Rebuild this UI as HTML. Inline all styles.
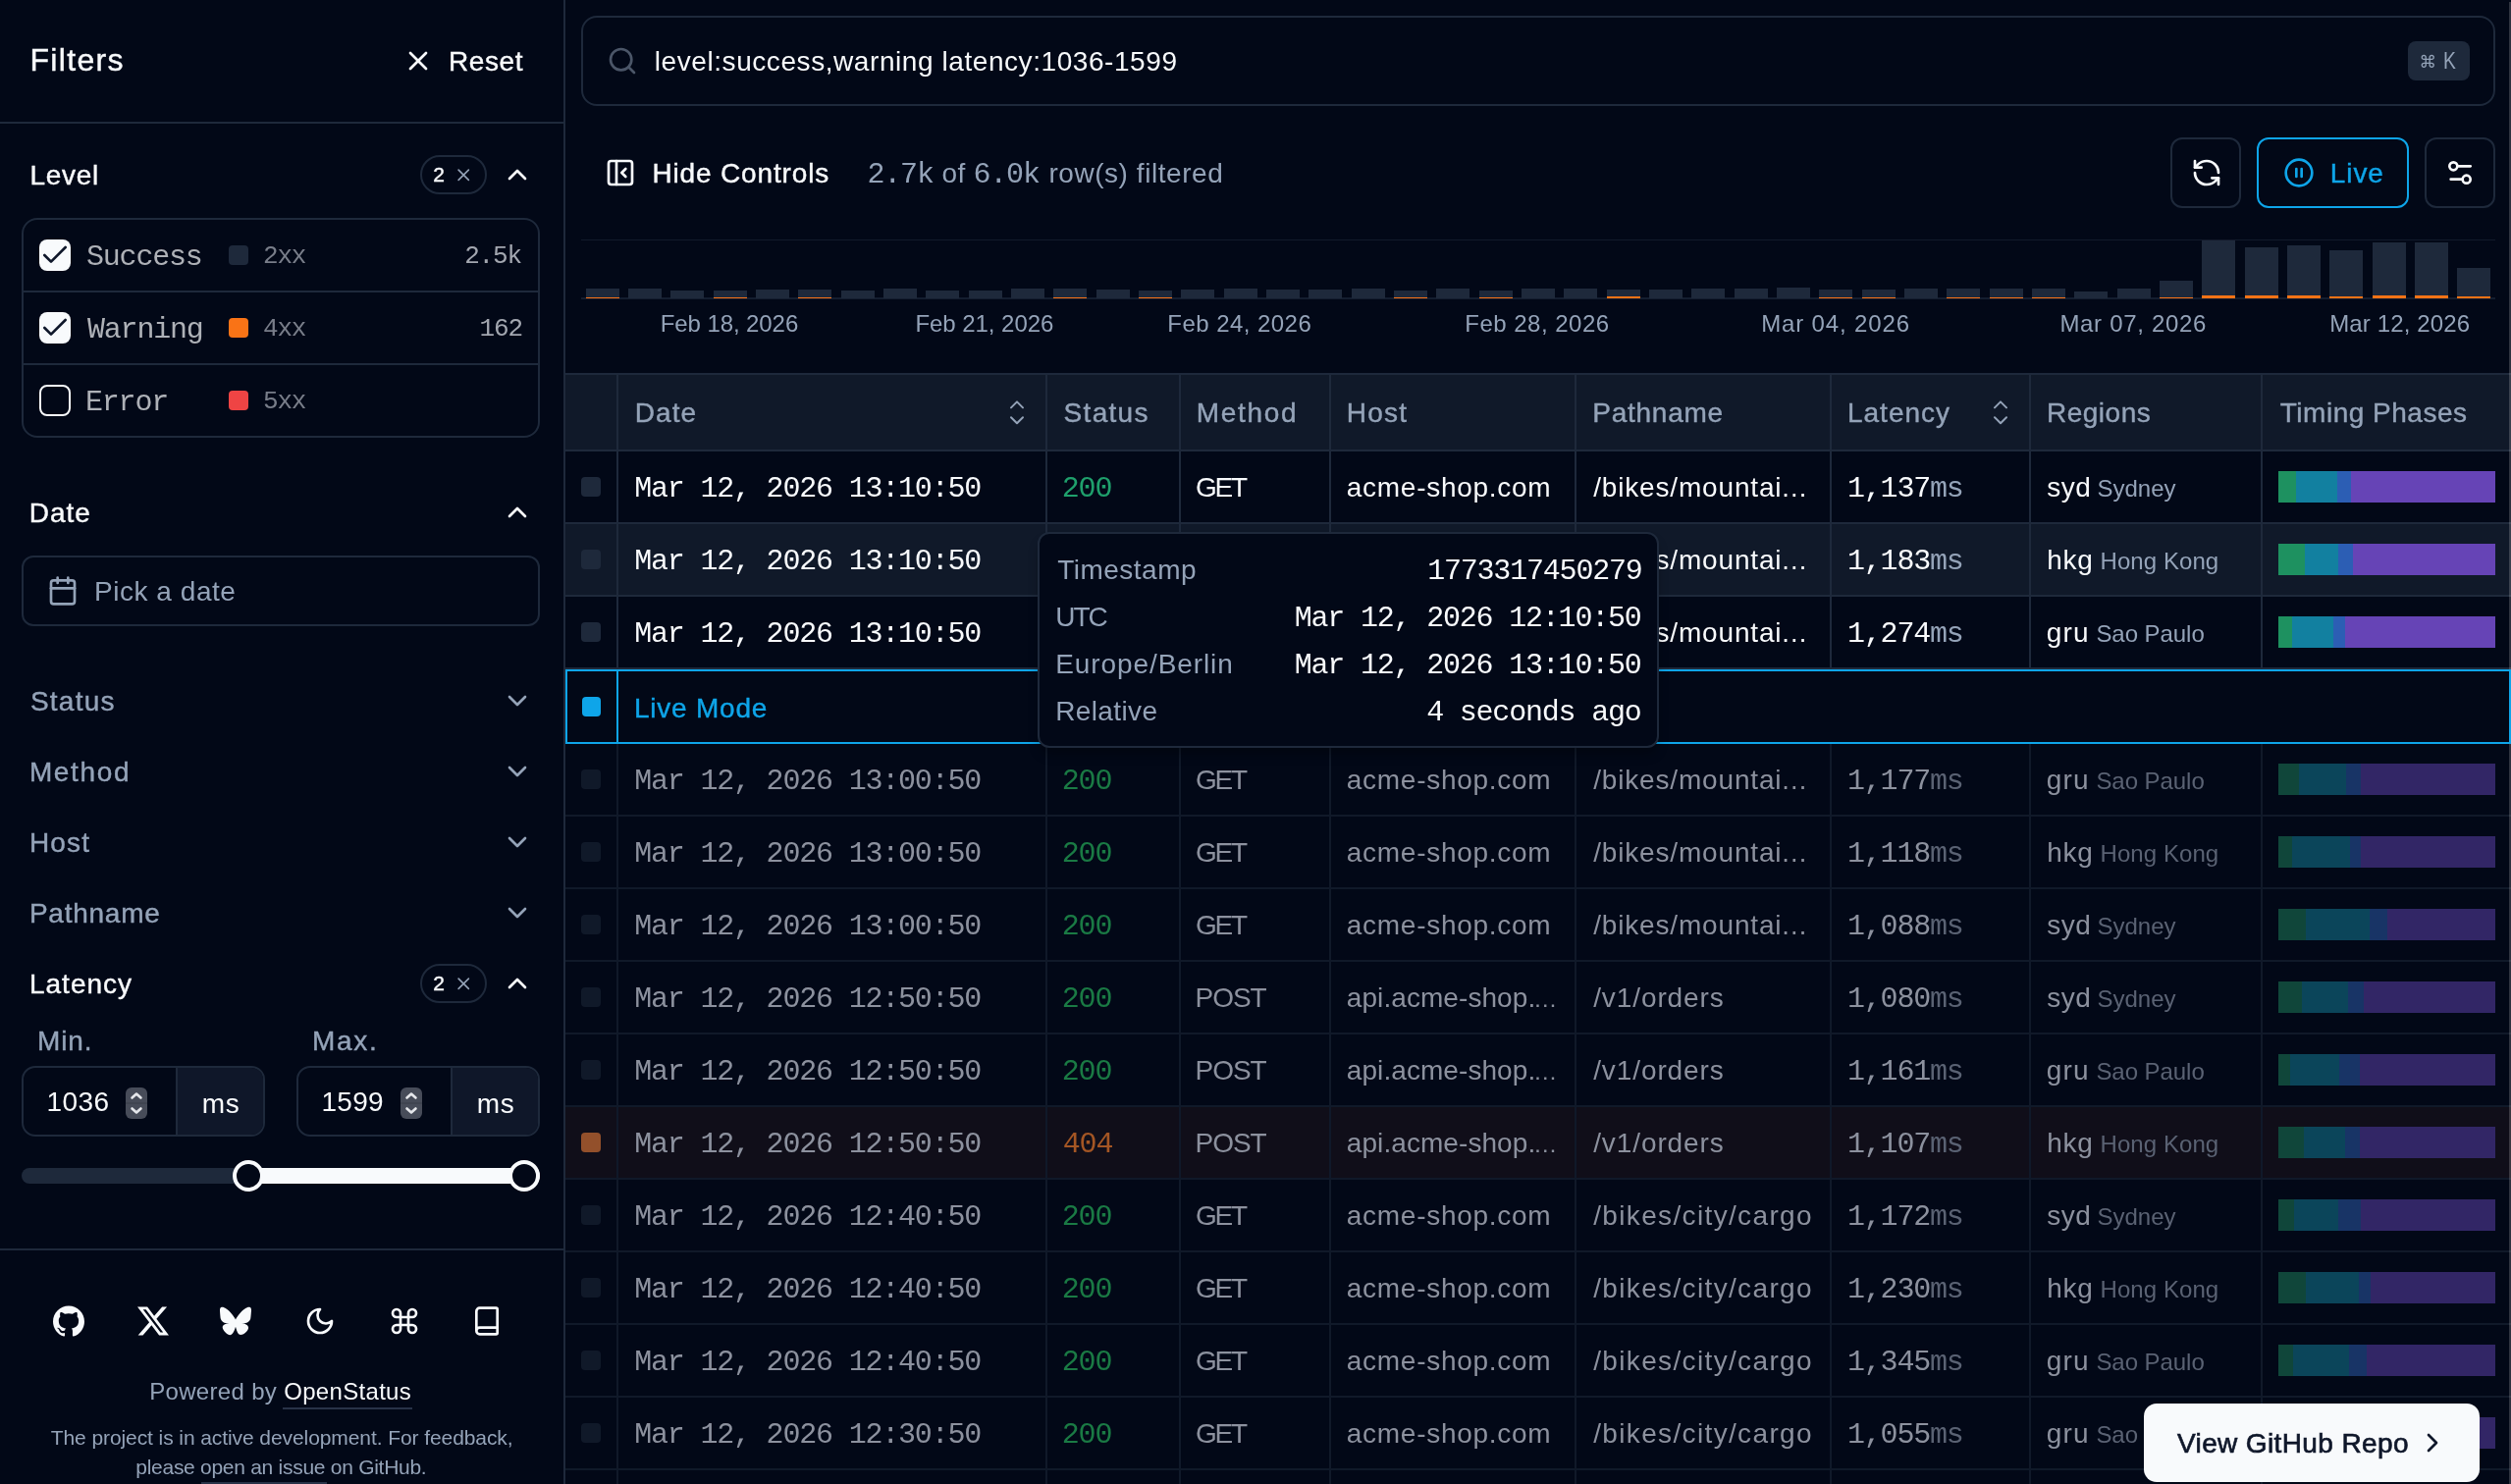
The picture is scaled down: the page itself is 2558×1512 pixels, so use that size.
<!DOCTYPE html>
<html lang="en"><head><meta charset="utf-8"><title>Data Table Filters</title><style>
html,body{margin:0;padding:0}
html{overflow:hidden;background:#020817}
body{width:2558px;height:1512px;overflow:hidden;position:relative;background:#020817;will-change:transform;-webkit-font-smoothing:antialiased;font-family:"Liberation Sans",sans-serif;color:#f8fafc}
div,span.t,svg.ic{position:absolute}
span.t{white-space:pre;display:block}
span.m{font-family:"Liberation Mono",monospace}
aside,header,section,main{display:contents}
</style></head><body>
<aside>
<div style="left:574px;top:0px;width:2px;height:1512px;background:#1e293b"></div>
<div style="left:0px;top:124px;width:574px;height:2px;background:#1e293b"></div>
<span class="t" style="left:30.40px;top:40.00px;font-size:32px;line-height:42px;color:#f8fafc;letter-spacing:1.348px;-webkit-text-stroke:0.4px;">Filters</span>
<svg class="ic" style="left:410px;top:46px" width="32" height="32" viewBox="0 0 24 24" fill="none" stroke="#f8fafc" stroke-width="2" stroke-linecap="round" stroke-linejoin="round"><path d="M18 6 6 18"/><path d="m6 6 12 12"/></svg>
<span class="t" style="left:457.10px;top:45.00px;font-size:28px;line-height:36px;color:#f8fafc;letter-spacing:0.559px;-webkit-text-stroke:0.4px;">Reset</span>
<span class="t" style="left:30.40px;top:161.00px;font-size:28px;line-height:36px;color:#f8fafc;letter-spacing:0.721px;-webkit-text-stroke:0.4px;">Level</span>
<div style="left:428px;top:158px;width:68px;height:40px;border:2px solid #1e293b;border-radius:20px;box-sizing:border-box"></div>
<span class="t" style="left:441.30px;top:164.00px;font-size:21px;line-height:27px;color:#f8fafc;-webkit-text-stroke:0.4px;">2</span>
<svg class="ic" style="left:461.7px;top:167.9px" width="20.5" height="20.5" viewBox="0 0 24 24" fill="none" stroke="#94a3b8" stroke-width="1.9" stroke-linecap="round" stroke-linejoin="round"><path d="M18 6 6 18"/><path d="m6 6 12 12"/></svg>
<svg class="ic" style="left:511px;top:162px" width="32" height="32" viewBox="0 0 24 24" fill="none" stroke="#f8fafc" stroke-width="2" stroke-linecap="round" stroke-linejoin="round"><path d="m18 15-6-6-6 6"/></svg>
<div style="left:22px;top:222px;width:528px;height:224px;border:2px solid #1e293b;border-radius:16px;box-sizing:border-box"></div>
<div style="left:24px;top:296px;width:524px;height:2px;background:#1e293b"></div>
<div style="left:24px;top:370px;width:524px;height:2px;background:#1e293b"></div>
<div style="left:40px;top:244px;width:32px;height:32px;background:#f8fafc;border-radius:8px"></div>
<svg class="ic" style="left:40px;top:244px" width="32" height="32" viewBox="0 0 24 24" fill="none" stroke="#0f172a" stroke-width="2" stroke-linecap="round" stroke-linejoin="round"><path d="M20 6 9 17l-5-5"/></svg>
<span class="t m" style="left:88.00px;top:243.00px;font-size:30px;line-height:39px;color:#aeb1b7;letter-spacing:-1.200px;">Success</span>
<div style="left:233px;top:250px;width:20px;height:20px;background:#1e293b;border-radius:4px"></div>
<span class="t m" style="left:268.00px;top:244.00px;font-size:26px;line-height:34px;color:#787d89;letter-spacing:-1.200px;">2xx</span>
<span class="t m" style="left:473.19px;top:244.00px;font-size:26px;line-height:34px;color:#a3a7b0;letter-spacing:-1.200px;">2.5k</span>
<div style="left:40px;top:318px;width:32px;height:32px;background:#f8fafc;border-radius:8px"></div>
<svg class="ic" style="left:40px;top:318px" width="32" height="32" viewBox="0 0 24 24" fill="none" stroke="#0f172a" stroke-width="2" stroke-linecap="round" stroke-linejoin="round"><path d="M20 6 9 17l-5-5"/></svg>
<span class="t m" style="left:89.00px;top:317.00px;font-size:30px;line-height:39px;color:#aeb1b7;letter-spacing:-1.200px;">Warning</span>
<div style="left:233px;top:324px;width:20px;height:20px;background:#f97316;border-radius:4px"></div>
<span class="t m" style="left:268.00px;top:318.00px;font-size:26px;line-height:34px;color:#787d89;letter-spacing:-1.200px;">4xx</span>
<span class="t m" style="left:488.59px;top:318.00px;font-size:26px;line-height:34px;color:#a3a7b0;letter-spacing:-1.200px;">162</span>
<div style="left:40px;top:392px;width:32px;height:32px;border:2px solid #f8fafc;border-radius:8px;box-sizing:border-box"></div>
<span class="t m" style="left:87.00px;top:391.00px;font-size:30px;line-height:39px;color:#aeb1b7;letter-spacing:-1.200px;">Error</span>
<div style="left:233px;top:398px;width:20px;height:20px;background:#ef4444;border-radius:4px"></div>
<span class="t m" style="left:268.00px;top:392.00px;font-size:26px;line-height:34px;color:#787d89;letter-spacing:-1.200px;">5xx</span>
<span class="t" style="left:29.70px;top:505.00px;font-size:28px;line-height:36px;color:#f8fafc;letter-spacing:0.976px;-webkit-text-stroke:0.4px;">Date</span>
<svg class="ic" style="left:511px;top:506px" width="32" height="32" viewBox="0 0 24 24" fill="none" stroke="#f8fafc" stroke-width="2" stroke-linecap="round" stroke-linejoin="round"><path d="m18 15-6-6-6 6"/></svg>
<div style="left:22px;top:566px;width:528px;height:72px;border:2px solid #1e293b;border-radius:12px;box-sizing:border-box"></div>
<svg class="ic" style="left:48px;top:586px" width="32" height="32" viewBox="0 0 24 24" fill="none" stroke="#94a3b8" stroke-width="2" stroke-linecap="round" stroke-linejoin="round"><path d="M8 2v4"/><path d="M16 2v4"/><rect width="18" height="18" x="3" y="4" rx="2"/><path d="M3 10h18"/></svg>
<span class="t" style="left:96.00px;top:585.00px;font-size:28px;line-height:36px;color:#94a3b8;letter-spacing:0.535px;">Pick a date</span>
<span class="t" style="left:30.90px;top:697.00px;font-size:28px;line-height:36px;color:#94a3b8;letter-spacing:1.244px;-webkit-text-stroke:0.4px;">Status</span>
<svg class="ic" style="left:511px;top:698px" width="32" height="32" viewBox="0 0 24 24" fill="none" stroke="#94a3b8" stroke-width="2" stroke-linecap="round" stroke-linejoin="round"><path d="m6 9 6 6 6-6"/></svg>
<span class="t" style="left:29.90px;top:769.00px;font-size:28px;line-height:36px;color:#94a3b8;letter-spacing:1.656px;-webkit-text-stroke:0.4px;">Method</span>
<svg class="ic" style="left:511px;top:770px" width="32" height="32" viewBox="0 0 24 24" fill="none" stroke="#94a3b8" stroke-width="2" stroke-linecap="round" stroke-linejoin="round"><path d="m6 9 6 6 6-6"/></svg>
<span class="t" style="left:29.90px;top:841.00px;font-size:28px;line-height:36px;color:#94a3b8;letter-spacing:1.169px;-webkit-text-stroke:0.4px;">Host</span>
<svg class="ic" style="left:511px;top:842px" width="32" height="32" viewBox="0 0 24 24" fill="none" stroke="#94a3b8" stroke-width="2" stroke-linecap="round" stroke-linejoin="round"><path d="m6 9 6 6 6-6"/></svg>
<span class="t" style="left:29.90px;top:913.00px;font-size:28px;line-height:36px;color:#94a3b8;letter-spacing:0.762px;-webkit-text-stroke:0.4px;">Pathname</span>
<svg class="ic" style="left:511px;top:914px" width="32" height="32" viewBox="0 0 24 24" fill="none" stroke="#94a3b8" stroke-width="2" stroke-linecap="round" stroke-linejoin="round"><path d="m6 9 6 6 6-6"/></svg>
<span class="t" style="left:30.00px;top:985.00px;font-size:28px;line-height:36px;color:#f8fafc;letter-spacing:0.989px;-webkit-text-stroke:0.4px;">Latency</span>
<div style="left:428px;top:982px;width:68px;height:40px;border:2px solid #1e293b;border-radius:20px;box-sizing:border-box"></div>
<span class="t" style="left:441.30px;top:988.00px;font-size:21px;line-height:27px;color:#f8fafc;-webkit-text-stroke:0.4px;">2</span>
<svg class="ic" style="left:461.7px;top:991.9px" width="20.5" height="20.5" viewBox="0 0 24 24" fill="none" stroke="#94a3b8" stroke-width="1.9" stroke-linecap="round" stroke-linejoin="round"><path d="M18 6 6 18"/><path d="m6 6 12 12"/></svg>
<svg class="ic" style="left:511px;top:986px" width="32" height="32" viewBox="0 0 24 24" fill="none" stroke="#f8fafc" stroke-width="2" stroke-linecap="round" stroke-linejoin="round"><path d="m18 15-6-6-6 6"/></svg>
<span class="t" style="left:38.10px;top:1043.00px;font-size:28px;line-height:36px;color:#94a3b8;letter-spacing:0.828px;-webkit-text-stroke:0.4px;">Min.</span>
<span class="t" style="left:318.00px;top:1043.00px;font-size:28px;line-height:36px;color:#94a3b8;letter-spacing:1.701px;-webkit-text-stroke:0.4px;">Max.</span>
<div style="left:22px;top:1086px;width:248px;height:72px;border:2px solid #1e293b;border-radius:14px;box-sizing:border-box;overflow:hidden"><div style="left:155px;top:-2px;width:2px;height:72px;background:#1e293b"></div><div style="left:157px;top:-2px;width:90px;height:72px;background:#0f1729"></div></div>
<span class="t" style="left:47.50px;top:1105.00px;font-size:28px;line-height:36px;color:#f8fafc;letter-spacing:0.428px;">1036</span>
<svg class="ic" style="left:128px;top:1108px" width="22" height="32" viewBox="0 0 22 32"><rect width="22" height="32" rx="6" fill="#474c59"/><rect y="15.5" width="22" height="1" fill="#3a3f4b"/><path d="M6.5 10.5 11 6.5l4.5 4M6.5 21.5 11 25.5l4.5-4" fill="none" stroke="#e5e7eb" stroke-width="2.6" stroke-linecap="round" stroke-linejoin="round"/></svg>
<span class="t" style="left:205.80px;top:1107.00px;font-size:28px;line-height:36px;color:#f8fafc;letter-spacing:0.576px;">ms</span>
<div style="left:302px;top:1086px;width:248px;height:72px;border:2px solid #1e293b;border-radius:14px;box-sizing:border-box;overflow:hidden"><div style="left:155px;top:-2px;width:2px;height:72px;background:#1e293b"></div><div style="left:157px;top:-2px;width:90px;height:72px;background:#0f1729"></div></div>
<span class="t" style="left:327.40px;top:1105.00px;font-size:28px;line-height:36px;color:#f8fafc;letter-spacing:0.328px;">1599</span>
<svg class="ic" style="left:408px;top:1108px" width="22" height="32" viewBox="0 0 22 32"><rect width="22" height="32" rx="6" fill="#474c59"/><rect y="15.5" width="22" height="1" fill="#3a3f4b"/><path d="M6.5 10.5 11 6.5l4.5 4M6.5 21.5 11 25.5l4.5-4" fill="none" stroke="#e5e7eb" stroke-width="2.6" stroke-linecap="round" stroke-linejoin="round"/></svg>
<span class="t" style="left:485.80px;top:1107.00px;font-size:28px;line-height:36px;color:#f8fafc;letter-spacing:0.576px;">ms</span>
<div style="left:22px;top:1190px;width:528px;height:16px;background:#1e293b;border-radius:8px"></div>
<div style="left:252px;top:1190px;width:298px;height:16px;background:#f8fafc;border-radius:0 8px 8px 0"></div>
<div style="left:237.4px;top:1182px;width:32px;height:32px;border:4px solid #f8fafc;background:#020817;border-radius:16px;box-sizing:border-box"></div>
<div style="left:518.2px;top:1182px;width:32px;height:32px;border:4px solid #f8fafc;background:#020817;border-radius:16px;box-sizing:border-box"></div>
<div style="left:0px;top:1272px;width:574px;height:2px;background:#1e293b"></div>
<svg class="ic" style="left:53.8px;top:1330px" width="32" height="32" viewBox="0 0 24 24" fill="#f8fafc"><path d="M12 .297c-6.63 0-12 5.373-12 12 0 5.303 3.438 9.8 8.205 11.385.6.113.82-.258.82-.577 0-.285-.01-1.04-.015-2.04-3.338.724-4.042-1.61-4.042-1.61C4.422 18.07 3.633 17.7 3.633 17.7c-1.087-.744.084-.729.084-.729 1.205.084 1.838 1.236 1.838 1.236 1.07 1.835 2.809 1.305 3.495.998.108-.776.417-1.305.76-1.605-2.665-.3-5.466-1.332-5.466-5.93 0-1.31.465-2.38 1.235-3.22-.135-.303-.54-1.523.105-3.176 0 0 1.005-.322 3.3 1.23.96-.267 1.98-.399 3-.405 1.02.006 2.04.138 3 .405 2.28-1.552 3.285-1.23 3.285-1.23.645 1.653.24 2.873.12 3.176.765.84 1.23 1.91 1.23 3.22 0 4.61-2.805 5.625-5.475 5.92.42.36.81 1.096.81 2.22 0 1.606-.015 2.896-.015 3.286 0 .315.21.69.825.57C20.565 22.092 24 17.592 24 12.297c0-6.627-5.373-12-12-12"/></svg>
<svg class="ic" style="left:140.3px;top:1330px" width="32" height="32" viewBox="0 0 24 24" fill="#f8fafc"><path d="M18.901 1.153h3.68l-8.04 9.19L24 22.846h-7.406l-5.8-7.584-6.638 7.584H.474l8.6-9.83L0 1.154h7.594l5.243 6.932ZM17.61 20.644h2.039L6.486 3.24H4.298Z"/></svg>
<svg class="ic" style="left:224px;top:1330px" width="32" height="32" viewBox="0 0 24 24" fill="#f8fafc"><path d="M12 10.8c-1.087-2.114-4.046-6.053-6.798-7.995C2.566.944 1.561 1.266.902 1.565.139 1.908 0 3.08 0 3.768c0 .69.378 5.65.624 6.479.815 2.736 3.713 3.66 6.383 3.364.136-.02.275-.039.415-.056-.138.022-.276.04-.415.056-3.912.58-7.387 2.005-2.83 7.078 5.013 5.19 6.87-1.113 7.823-4.308.953 3.195 2.05 9.271 7.733 4.308 4.267-4.308 1.172-6.498-2.74-7.078a8.741 8.741 0 0 1-.415-.056c.14.017.279.036.415.056 2.67.297 5.568-.628 6.383-3.364.246-.828.624-5.79.624-6.478 0-.69-.139-1.861-.902-2.206-.659-.298-1.664-.62-4.3 1.24C16.046 4.748 13.087 8.687 12 10.8Z"/></svg>
<svg class="ic" style="left:310px;top:1330px" width="32" height="32" viewBox="0 0 24 24" fill="none" stroke="#f8fafc" stroke-width="2" stroke-linecap="round" stroke-linejoin="round"><path d="M12 3a6 6 0 0 0 9 9 9 9 0 1 1-9-9Z"/></svg>
<svg class="ic" style="left:396px;top:1330px" width="32" height="32" viewBox="0 0 24 24" fill="none" stroke="#f8fafc" stroke-width="2" stroke-linecap="round" stroke-linejoin="round"><path d="M15 6v12a3 3 0 1 0 3-3H6a3 3 0 1 0 3 3V6a3 3 0 1 0-3 3h12a3 3 0 1 0-3-3"/></svg>
<svg class="ic" style="left:480px;top:1330px" width="32" height="32" viewBox="0 0 24 24" fill="none" stroke="#f8fafc" stroke-width="2" stroke-linecap="round" stroke-linejoin="round"><path d="M4 19.5v-15A2.5 2.5 0 0 1 6.5 2H19a1 1 0 0 1 1 1v18a1 1 0 0 1-1 1H6.5a1 1 0 0 1 0-5H20"/></svg>
<span class="t" style="left:152.20px;top:1402.00px;font-size:24px;line-height:31px;color:#94a3b8;letter-spacing:0.322px;">Powered by <span style="color:#f8fafc">OpenStatus</span></span>
<div style="left:288px;top:1434px;width:132px;height:2px;background:#283348"></div>
<span class="t" style="left:51.70px;top:1451.00px;font-size:21px;line-height:27px;color:#94a3b8;letter-spacing:-0.083px;">The project is in active development. For feedback,</span>
<span class="t" style="left:138.30px;top:1481.00px;font-size:21px;line-height:27px;color:#94a3b8;letter-spacing:-0.279px;">please <span>open an issue</span> on GitHub.</span>
<div style="left:205px;top:1510px;width:128px;height:2px;background:#283348"></div>
</aside>
<header>
<div style="left:592px;top:16px;width:1950px;height:92px;border:2px solid #1e293b;border-radius:16px;box-sizing:border-box"></div>
<svg class="ic" style="left:618px;top:46px" width="32" height="32" viewBox="0 0 24 24" fill="none" stroke="#4b5668" stroke-width="2" stroke-linecap="round" stroke-linejoin="round"><circle cx="11" cy="11" r="8"/><path d="m21 21-4.3-4.3"/></svg>
<span class="t" style="left:666.80px;top:45.00px;font-size:28px;line-height:36px;color:#f8fafc;letter-spacing:0.570px;">level:success,warning latency:1036-1599</span>
<div style="left:2453px;top:42px;width:63px;height:40px;background:#1e293b;border-radius:8px"></div>
<span class="t" style="left:2464.6px;top:49.5px;font-size:17.5px;line-height:26px;color:#94a3b8;font-family:'DejaVu Sans',sans-serif">⌘</span>
<span class="t" style="left:2489.20px;top:47.00px;font-size:23px;line-height:30px;color:#94a3b8;transform:scaleX(.84);transform-origin:0 0;">K</span>
<svg class="ic" style="left:616px;top:160px" width="32" height="32" viewBox="0 0 24 24" fill="none" stroke="#f8fafc" stroke-width="2" stroke-linecap="round" stroke-linejoin="round"><rect width="18" height="18" x="3" y="3" rx="2"/><path d="M9 3v18"/><path d="m16 15-3-3 3-3"/></svg>
<span class="t" style="left:664.40px;top:159.00px;font-size:28px;line-height:36px;color:#f8fafc;letter-spacing:0.856px;-webkit-text-stroke:0.4px;">Hide Controls</span>
<span class="t m" style="left:883.50px;top:159.00px;font-size:30px;line-height:39px;color:#94a3b8;letter-spacing:-1.200px;">2.7k</span>
<span class="t" style="left:959.60px;top:159.00px;font-size:28px;line-height:36px;color:#94a3b8;letter-spacing:0.328px;">of</span>
<span class="t m" style="left:991.50px;top:159.00px;font-size:30px;line-height:39px;color:#94a3b8;letter-spacing:-1.200px;">6.0k</span>
<span class="t" style="left:1068.40px;top:159.00px;font-size:28px;line-height:36px;color:#94a3b8;letter-spacing:0.556px;">row(s) filtered</span>
<div style="left:2211px;top:140px;width:72px;height:72px;border:2px solid #1e293b;border-radius:12px;box-sizing:border-box"></div>
<svg class="ic" style="left:2232px;top:160px" width="32" height="32" viewBox="0 0 24 24" fill="none" stroke="#f8fafc" stroke-width="2" stroke-linecap="round" stroke-linejoin="round"><path d="M21 12a9 9 0 0 0-9-9 9.75 9.75 0 0 0-6.74 2.74L3 8"/><path d="M3 3v5h5"/><path d="M3 12a9 9 0 0 0 9 9 9.75 9.75 0 0 0 6.74-2.74L21 16"/><path d="M16 16h5v5"/></svg>
<div style="left:2299px;top:140px;width:155px;height:72px;border:2px solid #0ea5e9;border-radius:12px;box-sizing:border-box"></div>
<svg class="ic" style="left:2326px;top:160px" width="32" height="32" viewBox="0 0 24 24" fill="none" stroke="#0ea5e9" stroke-width="2" stroke-linecap="round" stroke-linejoin="round"><circle cx="12" cy="12" r="10"/><line x1="10" x2="10" y1="15" y2="9"/><line x1="14" x2="14" y1="15" y2="9"/></svg>
<span class="t" style="left:2373.80px;top:159.00px;font-size:28px;line-height:36px;color:#0ea5e9;letter-spacing:0.902px;-webkit-text-stroke:0.4px;">Live</span>
<div style="left:2470px;top:140px;width:72px;height:72px;border:2px solid #1e293b;border-radius:12px;box-sizing:border-box"></div>
<svg class="ic" style="left:2490px;top:160px" width="32" height="32" viewBox="0 0 24 24" fill="none" stroke="#f8fafc" stroke-width="2" stroke-linecap="round" stroke-linejoin="round"><path d="M20 7h-9"/><path d="M14 17H5"/><circle cx="17" cy="17" r="3"/><circle cx="7" cy="7" r="3"/></svg>
</header>
<section>
<div style="left:592px;top:244px;width:1950px;height:1px;background:#121a2b"></div>
<div style="left:592px;top:303px;width:1950px;height:2px;background:#141d2f"></div>
<div style="left:596.55px;top:294.3px;width:34px;height:9.7px;background:#1e293b"></div>
<div style="left:596.55px;top:302.8px;width:34px;height:1.2px;background:#f97316"></div>
<div style="left:639.88px;top:294.3px;width:34px;height:9.7px;background:#1e293b"></div>
<div style="left:683.22px;top:296px;width:34px;height:8px;background:#1e293b"></div>
<div style="left:726.55px;top:296px;width:34px;height:8px;background:#1e293b"></div>
<div style="left:726.55px;top:302.8px;width:34px;height:1.2px;background:#f97316"></div>
<div style="left:769.88px;top:295px;width:34px;height:9px;background:#1e293b"></div>
<div style="left:813.22px;top:295px;width:34px;height:9px;background:#1e293b"></div>
<div style="left:813.22px;top:303px;width:34px;height:1px;background:#f97316"></div>
<div style="left:856.55px;top:295.5px;width:34px;height:8.5px;background:#1e293b"></div>
<div style="left:899.88px;top:294.3px;width:34px;height:9.7px;background:#1e293b"></div>
<div style="left:943.22px;top:295.5px;width:34px;height:8.5px;background:#1e293b"></div>
<div style="left:986.55px;top:296px;width:34px;height:8px;background:#1e293b"></div>
<div style="left:1029.88px;top:294.3px;width:34px;height:9.7px;background:#1e293b"></div>
<div style="left:1073.22px;top:294.3px;width:34px;height:9.7px;background:#1e293b"></div>
<div style="left:1073.22px;top:302.8px;width:34px;height:1.2px;background:#f97316"></div>
<div style="left:1116.55px;top:295px;width:34px;height:9px;background:#1e293b"></div>
<div style="left:1159.88px;top:296px;width:34px;height:8px;background:#1e293b"></div>
<div style="left:1159.88px;top:303px;width:34px;height:1px;background:#f97316"></div>
<div style="left:1203.22px;top:294.5px;width:34px;height:9.5px;background:#1e293b"></div>
<div style="left:1246.55px;top:294.3px;width:34px;height:9.7px;background:#1e293b"></div>
<div style="left:1289.88px;top:295px;width:34px;height:9px;background:#1e293b"></div>
<div style="left:1333.22px;top:295px;width:34px;height:9px;background:#1e293b"></div>
<div style="left:1376.55px;top:294.3px;width:34px;height:9.7px;background:#1e293b"></div>
<div style="left:1419.88px;top:296.3px;width:34px;height:7.7px;background:#1e293b"></div>
<div style="left:1419.88px;top:303px;width:34px;height:1px;background:#f97316"></div>
<div style="left:1463.22px;top:293.5px;width:34px;height:10.5px;background:#1e293b"></div>
<div style="left:1506.55px;top:295.5px;width:34px;height:8.5px;background:#1e293b"></div>
<div style="left:1506.55px;top:302.8px;width:34px;height:1.2px;background:#f97316"></div>
<div style="left:1549.88px;top:294px;width:34px;height:10px;background:#1e293b"></div>
<div style="left:1593.22px;top:294.3px;width:34px;height:9.7px;background:#1e293b"></div>
<div style="left:1636.55px;top:294.5px;width:34px;height:9.5px;background:#1e293b"></div>
<div style="left:1636.55px;top:302px;width:34px;height:2px;background:#f97316"></div>
<div style="left:1679.88px;top:294.5px;width:34px;height:9.5px;background:#1e293b"></div>
<div style="left:1723.22px;top:294.3px;width:34px;height:9.7px;background:#1e293b"></div>
<div style="left:1766.55px;top:294.3px;width:34px;height:9.7px;background:#1e293b"></div>
<div style="left:1809.88px;top:293.3px;width:34px;height:10.7px;background:#1e293b"></div>
<div style="left:1853.22px;top:294.5px;width:34px;height:9.5px;background:#1e293b"></div>
<div style="left:1853.22px;top:303px;width:34px;height:1px;background:#f97316"></div>
<div style="left:1896.55px;top:295px;width:34px;height:9px;background:#1e293b"></div>
<div style="left:1896.55px;top:303.2px;width:34px;height:0.8px;background:#f97316"></div>
<div style="left:1939.88px;top:294.3px;width:34px;height:9.7px;background:#1e293b"></div>
<div style="left:1983.22px;top:294.3px;width:34px;height:9.7px;background:#1e293b"></div>
<div style="left:1983.22px;top:303px;width:34px;height:1px;background:#f97316"></div>
<div style="left:2026.55px;top:294px;width:34px;height:10px;background:#1e293b"></div>
<div style="left:2026.55px;top:303.2px;width:34px;height:0.8px;background:#f97316"></div>
<div style="left:2069.88px;top:294px;width:34px;height:10px;background:#1e293b"></div>
<div style="left:2069.88px;top:303.2px;width:34px;height:0.8px;background:#f97316"></div>
<div style="left:2113.22px;top:296.5px;width:34px;height:7.5px;background:#1e293b"></div>
<div style="left:2156.55px;top:294px;width:34px;height:10px;background:#1e293b"></div>
<div style="left:2199.88px;top:286.3px;width:34px;height:17.7px;background:#1e293b"></div>
<div style="left:2199.88px;top:303.2px;width:34px;height:0.8px;background:#f97316"></div>
<div style="left:2243.22px;top:245.3px;width:34px;height:58.7px;background:#1e293b"></div>
<div style="left:2243.22px;top:301px;width:34px;height:3px;background:#f97316"></div>
<div style="left:2286.55px;top:252px;width:34px;height:52px;background:#1e293b"></div>
<div style="left:2286.55px;top:301.4px;width:34px;height:2.6px;background:#f97316"></div>
<div style="left:2329.88px;top:249.7px;width:34px;height:54.3px;background:#1e293b"></div>
<div style="left:2329.88px;top:301px;width:34px;height:3px;background:#f97316"></div>
<div style="left:2373.22px;top:255px;width:34px;height:49px;background:#1e293b"></div>
<div style="left:2373.22px;top:301.6px;width:34px;height:2.4px;background:#f97316"></div>
<div style="left:2416.55px;top:247px;width:34px;height:57px;background:#1e293b"></div>
<div style="left:2416.55px;top:301.2px;width:34px;height:2.8px;background:#f97316"></div>
<div style="left:2459.88px;top:247.3px;width:34px;height:56.7px;background:#1e293b"></div>
<div style="left:2459.88px;top:301.2px;width:34px;height:2.8px;background:#f97316"></div>
<div style="left:2503.22px;top:273.2px;width:34px;height:30.8px;background:#1e293b"></div>
<div style="left:2503.22px;top:302px;width:34px;height:2px;background:#f97316"></div>
<span class="t" style="left:672.70px;top:314.00px;font-size:24px;line-height:31px;color:#94a3b8;letter-spacing:-0.082px;">Feb 18, 2026</span>
<span class="t" style="left:932.40px;top:314.00px;font-size:24px;line-height:31px;color:#94a3b8;letter-spacing:-0.045px;">Feb 21, 2026</span>
<span class="t" style="left:1189.30px;top:314.00px;font-size:24px;line-height:31px;color:#94a3b8;letter-spacing:0.455px;">Feb 24, 2026</span>
<span class="t" style="left:1492.30px;top:314.00px;font-size:24px;line-height:31px;color:#94a3b8;letter-spacing:0.491px;">Feb 28, 2026</span>
<span class="t" style="left:1794.20px;top:314.00px;font-size:24px;line-height:31px;color:#94a3b8;letter-spacing:0.857px;">Mar 04, 2026</span>
<span class="t" style="left:2098.40px;top:314.00px;font-size:24px;line-height:31px;color:#94a3b8;letter-spacing:0.684px;">Mar 07, 2026</span>
<span class="t" style="left:2373.20px;top:314.00px;font-size:24px;line-height:31px;color:#94a3b8;letter-spacing:0.139px;">Mar 12, 2026</span>
</section>
<main>
<div style="left:576px;top:380px;width:1982px;height:2px;background:#1e293b"></div>
<div style="left:576px;top:382px;width:1982px;height:76px;background:#101929"><div style="left:52px;top:0px;width:2px;height:76px;background:#1e293b"></div><div style="left:489px;top:0px;width:2px;height:76px;background:#1e293b"></div><div style="left:625px;top:0px;width:2px;height:76px;background:#1e293b"></div><div style="left:778px;top:0px;width:2px;height:76px;background:#1e293b"></div><div style="left:1028px;top:0px;width:2px;height:76px;background:#1e293b"></div><div style="left:1288px;top:0px;width:2px;height:76px;background:#1e293b"></div><div style="left:1491px;top:0px;width:2px;height:76px;background:#1e293b"></div><div style="left:1727px;top:0px;width:2px;height:76px;background:#1e293b"></div><span class="t" style="left:70.70px;top:21.00px;font-size:28px;line-height:36px;color:#94a3b8;letter-spacing:1.076px;-webkit-text-stroke:0.4px;">Date</span><span class="t" style="left:507.60px;top:21.00px;font-size:28px;line-height:36px;color:#94a3b8;letter-spacing:1.304px;-webkit-text-stroke:0.4px;">Status</span><span class="t" style="left:642.80px;top:21.00px;font-size:28px;line-height:36px;color:#94a3b8;letter-spacing:1.676px;-webkit-text-stroke:0.4px;">Method</span><span class="t" style="left:795.80px;top:21.00px;font-size:28px;line-height:36px;color:#94a3b8;letter-spacing:1.236px;-webkit-text-stroke:0.4px;">Host</span><span class="t" style="left:1046.20px;top:21.00px;font-size:28px;line-height:36px;color:#94a3b8;letter-spacing:0.762px;-webkit-text-stroke:0.4px;">Pathname</span><span class="t" style="left:1306.00px;top:21.00px;font-size:28px;line-height:36px;color:#94a3b8;letter-spacing:0.989px;-webkit-text-stroke:0.4px;">Latency</span><span class="t" style="left:1508.90px;top:21.00px;font-size:28px;line-height:36px;color:#94a3b8;letter-spacing:0.528px;-webkit-text-stroke:0.4px;">Regions</span><span class="t" style="left:1746.80px;top:21.00px;font-size:28px;line-height:36px;color:#94a3b8;letter-spacing:0.504px;-webkit-text-stroke:0.4px;">Timing Phases</span><svg class="ic" style="left:449.7px;top:24px" width="20" height="30" viewBox="0 0 20 30" fill="none" stroke="#94a3b8" stroke-width="2" stroke-linecap="round" stroke-linejoin="round"><path d="M4 9.4 10 3.4 16 9.4"/><path d="M4 19.2 10 25.2 16 19.2"/></svg><svg class="ic" style="left:1452.0px;top:24px" width="20" height="30" viewBox="0 0 20 30" fill="none" stroke="#94a3b8" stroke-width="2" stroke-linecap="round" stroke-linejoin="round"><path d="M4 9.4 10 3.4 16 9.4"/><path d="M4 19.2 10 25.2 16 19.2"/></svg></div>
<div style="left:576px;top:458px;width:1982px;height:2px;background:#1e293b"></div>
<div style="left:576px;top:460px;width:1982px;height:74px;"><div style="left:52px;top:0px;width:2px;height:74px;background:#1e293b"></div><div style="left:489px;top:0px;width:2px;height:74px;background:#1e293b"></div><div style="left:625px;top:0px;width:2px;height:74px;background:#1e293b"></div><div style="left:778px;top:0px;width:2px;height:74px;background:#1e293b"></div><div style="left:1028px;top:0px;width:2px;height:74px;background:#1e293b"></div><div style="left:1288px;top:0px;width:2px;height:74px;background:#1e293b"></div><div style="left:1491px;top:0px;width:2px;height:74px;background:#1e293b"></div><div style="left:1727px;top:0px;width:2px;height:74px;background:#1e293b"></div><div style="left:0px;top:72px;width:1982px;height:2px;background:#1e293b"></div><div style="left:16px;top:26px;width:20px;height:20px;background:#1e293b;border-radius:4px"></div><span class="t m" style="left:70.20px;top:19.00px;font-size:30px;line-height:39px;color:#f8fafc;letter-spacing:-1.200px;">Mar 12, 2026 13:10:50</span><span class="t m" style="left:505.80px;top:19.00px;font-size:30px;line-height:39px;color:#1fa06c;letter-spacing:-1.200px;">200</span><span class="t" style="left:642.00px;top:19.00px;font-size:28px;line-height:36px;color:#f8fafc;letter-spacing:-2.178px;">GET</span><span class="t" style="left:795.80px;top:19.00px;font-size:28px;line-height:36px;color:#f8fafc;letter-spacing:0.720px;">acme-shop.com</span><span class="t" style="left:1047.20px;top:19.00px;font-size:28px;line-height:36px;color:#f8fafc;letter-spacing:0.830px;">/bikes/mountai<span style="font-size:27.57px;letter-spacing:0;margin-left:-1.43px">…</span></span><span class="t" style="left:1509.20px;top:19.00px;font-size:28px;line-height:36px;color:#f8fafc;letter-spacing:0.500px;">syd</span><span class="t m" style="left:1306.00px;top:19.00px;font-size:30px;line-height:39px;color:#f8fafc;letter-spacing:-1.200px;">1,137</span><span class="t m" style="left:1390.00px;top:19.00px;font-size:30px;line-height:39px;color:#94a3b8;letter-spacing:-1.200px;">ms</span><span class="t" style="left:1560.40px;top:22.00px;font-size:24px;line-height:31px;color:#94a3b8;letter-spacing:0.030px;">Sydney</span><div style="left:1745px;top:20px;width:221px;height:32px;background:linear-gradient(90deg,#1e9160 0px 18px,#1280a0 18px 60px,#2c5eb4 60px 74px,#6644b6 74px 221px)"></div></div>
<div style="left:576px;top:534px;width:1982px;height:74px;background:#101929;"><div style="left:52px;top:0px;width:2px;height:74px;background:#1e293b"></div><div style="left:489px;top:0px;width:2px;height:74px;background:#1e293b"></div><div style="left:625px;top:0px;width:2px;height:74px;background:#1e293b"></div><div style="left:778px;top:0px;width:2px;height:74px;background:#1e293b"></div><div style="left:1028px;top:0px;width:2px;height:74px;background:#1e293b"></div><div style="left:1288px;top:0px;width:2px;height:74px;background:#1e293b"></div><div style="left:1491px;top:0px;width:2px;height:74px;background:#1e293b"></div><div style="left:1727px;top:0px;width:2px;height:74px;background:#1e293b"></div><div style="left:0px;top:72px;width:1982px;height:2px;background:#1e293b"></div><div style="left:16px;top:26px;width:20px;height:20px;background:#1e293b;border-radius:4px"></div><span class="t m" style="left:70.20px;top:19.00px;font-size:30px;line-height:39px;color:#f8fafc;letter-spacing:-1.200px;">Mar 12, 2026 13:10:50</span><span class="t m" style="left:505.80px;top:19.00px;font-size:30px;line-height:39px;color:#1fa06c;letter-spacing:-1.200px;">200</span><span class="t" style="left:642.00px;top:19.00px;font-size:28px;line-height:36px;color:#f8fafc;letter-spacing:-2.178px;">GET</span><span class="t" style="left:795.80px;top:19.00px;font-size:28px;line-height:36px;color:#f8fafc;letter-spacing:0.720px;">acme-shop.com</span><span class="t" style="left:1047.20px;top:19.00px;font-size:28px;line-height:36px;color:#f8fafc;letter-spacing:0.830px;">/bikes/mountai<span style="font-size:27.57px;letter-spacing:0;margin-left:-1.43px">…</span></span><span class="t" style="left:1509.20px;top:19.00px;font-size:28px;line-height:36px;color:#f8fafc;letter-spacing:0.714px;">hkg</span><span class="t m" style="left:1306.00px;top:19.00px;font-size:30px;line-height:39px;color:#f8fafc;letter-spacing:-1.200px;">1,183</span><span class="t m" style="left:1390.00px;top:19.00px;font-size:30px;line-height:39px;color:#94a3b8;letter-spacing:-1.200px;">ms</span><span class="t" style="left:1563.50px;top:22.00px;font-size:24px;line-height:31px;color:#94a3b8;letter-spacing:0.069px;">Hong Kong</span><div style="left:1745px;top:20px;width:221px;height:32px;background:linear-gradient(90deg,#1e9160 0px 27px,#1280a0 27px 61px,#2c5eb4 61px 76px,#6644b6 76px 221px)"></div></div>
<div style="left:576px;top:608px;width:1982px;height:74px;"><div style="left:52px;top:0px;width:2px;height:74px;background:#1e293b"></div><div style="left:489px;top:0px;width:2px;height:74px;background:#1e293b"></div><div style="left:625px;top:0px;width:2px;height:74px;background:#1e293b"></div><div style="left:778px;top:0px;width:2px;height:74px;background:#1e293b"></div><div style="left:1028px;top:0px;width:2px;height:74px;background:#1e293b"></div><div style="left:1288px;top:0px;width:2px;height:74px;background:#1e293b"></div><div style="left:1491px;top:0px;width:2px;height:74px;background:#1e293b"></div><div style="left:1727px;top:0px;width:2px;height:74px;background:#1e293b"></div><div style="left:0px;top:72px;width:1982px;height:2px;background:#1e293b"></div><div style="left:16px;top:26px;width:20px;height:20px;background:#1e293b;border-radius:4px"></div><span class="t m" style="left:70.20px;top:19.00px;font-size:30px;line-height:39px;color:#f8fafc;letter-spacing:-1.200px;">Mar 12, 2026 13:10:50</span><span class="t m" style="left:505.80px;top:19.00px;font-size:30px;line-height:39px;color:#1fa06c;letter-spacing:-1.200px;">200</span><span class="t" style="left:642.00px;top:19.00px;font-size:28px;line-height:36px;color:#f8fafc;letter-spacing:-2.178px;">GET</span><span class="t" style="left:795.80px;top:19.00px;font-size:28px;line-height:36px;color:#f8fafc;letter-spacing:0.720px;">acme-shop.com</span><span class="t" style="left:1047.20px;top:19.00px;font-size:28px;line-height:36px;color:#f8fafc;letter-spacing:0.830px;">/bikes/mountai<span style="font-size:27.57px;letter-spacing:0;margin-left:-1.43px">…</span></span><span class="t" style="left:1508.80px;top:19.00px;font-size:28px;line-height:36px;color:#f8fafc;letter-spacing:1.102px;">gru</span><span class="t m" style="left:1306.00px;top:19.00px;font-size:30px;line-height:39px;color:#f8fafc;letter-spacing:-1.200px;">1,274</span><span class="t m" style="left:1390.00px;top:19.00px;font-size:30px;line-height:39px;color:#94a3b8;letter-spacing:-1.200px;">ms</span><span class="t" style="left:1559.40px;top:22.00px;font-size:24px;line-height:31px;color:#94a3b8;letter-spacing:-0.051px;">Sao Paulo</span><div style="left:1745px;top:20px;width:221px;height:32px;background:linear-gradient(90deg,#1e9160 0px 14px,#1280a0 14px 56px,#2c5eb4 56px 68px,#6644b6 68px 221px)"></div></div>
<div style="left:576px;top:758px;width:1982px;height:74px;"><div style="left:52px;top:0px;width:2px;height:74px;background:#101929"></div><div style="left:489px;top:0px;width:2px;height:74px;background:#101929"></div><div style="left:625px;top:0px;width:2px;height:74px;background:#101929"></div><div style="left:778px;top:0px;width:2px;height:74px;background:#101929"></div><div style="left:1028px;top:0px;width:2px;height:74px;background:#101929"></div><div style="left:1288px;top:0px;width:2px;height:74px;background:#101929"></div><div style="left:1491px;top:0px;width:2px;height:74px;background:#101929"></div><div style="left:1727px;top:0px;width:2px;height:74px;background:#101929"></div><div style="left:0px;top:72px;width:1982px;height:2px;background:#101929"></div><div style="left:16px;top:26px;width:20px;height:20px;background:#101929;border-radius:4px"></div><span class="t m" style="left:70.20px;top:19.00px;font-size:30px;line-height:39px;color:#8c919e;letter-spacing:-1.200px;">Mar 12, 2026 13:00:50</span><span class="t m" style="left:505.80px;top:19.00px;font-size:30px;line-height:39px;color:#1a7a44;letter-spacing:-1.200px;">200</span><span class="t" style="left:642.00px;top:19.00px;font-size:28px;line-height:36px;color:#8c919e;letter-spacing:-2.178px;">GET</span><span class="t" style="left:795.80px;top:19.00px;font-size:28px;line-height:36px;color:#8c919e;letter-spacing:0.720px;">acme-shop.com</span><span class="t" style="left:1047.20px;top:19.00px;font-size:28px;line-height:36px;color:#8c919e;letter-spacing:0.830px;">/bikes/mountai<span style="font-size:27.57px;letter-spacing:0;margin-left:-1.43px">…</span></span><span class="t" style="left:1508.80px;top:19.00px;font-size:28px;line-height:36px;color:#8c919e;letter-spacing:1.102px;">gru</span><span class="t m" style="left:1306.00px;top:19.00px;font-size:30px;line-height:39px;color:#8c919e;letter-spacing:-1.200px;">1,177</span><span class="t m" style="left:1390.00px;top:19.00px;font-size:30px;line-height:39px;color:#5a6273;letter-spacing:-1.200px;">ms</span><span class="t" style="left:1559.40px;top:22.00px;font-size:24px;line-height:31px;color:#5a6273;letter-spacing:-0.051px;">Sao Paulo</span><div style="left:1745px;top:20px;width:221px;height:32px;background:linear-gradient(90deg,#10463a 0px 21px,#0b455a 21px 69px,#183466 69px 84px,#322666 84px 221px)"></div></div>
<div style="left:576px;top:832px;width:1982px;height:74px;"><div style="left:52px;top:0px;width:2px;height:74px;background:#101929"></div><div style="left:489px;top:0px;width:2px;height:74px;background:#101929"></div><div style="left:625px;top:0px;width:2px;height:74px;background:#101929"></div><div style="left:778px;top:0px;width:2px;height:74px;background:#101929"></div><div style="left:1028px;top:0px;width:2px;height:74px;background:#101929"></div><div style="left:1288px;top:0px;width:2px;height:74px;background:#101929"></div><div style="left:1491px;top:0px;width:2px;height:74px;background:#101929"></div><div style="left:1727px;top:0px;width:2px;height:74px;background:#101929"></div><div style="left:0px;top:72px;width:1982px;height:2px;background:#101929"></div><div style="left:16px;top:26px;width:20px;height:20px;background:#101929;border-radius:4px"></div><span class="t m" style="left:70.20px;top:19.00px;font-size:30px;line-height:39px;color:#8c919e;letter-spacing:-1.200px;">Mar 12, 2026 13:00:50</span><span class="t m" style="left:505.80px;top:19.00px;font-size:30px;line-height:39px;color:#1a7a44;letter-spacing:-1.200px;">200</span><span class="t" style="left:642.00px;top:19.00px;font-size:28px;line-height:36px;color:#8c919e;letter-spacing:-2.178px;">GET</span><span class="t" style="left:795.80px;top:19.00px;font-size:28px;line-height:36px;color:#8c919e;letter-spacing:0.720px;">acme-shop.com</span><span class="t" style="left:1047.20px;top:19.00px;font-size:28px;line-height:36px;color:#8c919e;letter-spacing:0.830px;">/bikes/mountai<span style="font-size:27.57px;letter-spacing:0;margin-left:-1.43px">…</span></span><span class="t" style="left:1509.20px;top:19.00px;font-size:28px;line-height:36px;color:#8c919e;letter-spacing:0.714px;">hkg</span><span class="t m" style="left:1306.00px;top:19.00px;font-size:30px;line-height:39px;color:#8c919e;letter-spacing:-1.200px;">1,118</span><span class="t m" style="left:1390.00px;top:19.00px;font-size:30px;line-height:39px;color:#5a6273;letter-spacing:-1.200px;">ms</span><span class="t" style="left:1563.50px;top:22.00px;font-size:24px;line-height:31px;color:#5a6273;letter-spacing:0.069px;">Hong Kong</span><div style="left:1745px;top:20px;width:221px;height:32px;background:linear-gradient(90deg,#10463a 0px 14px,#0b455a 14px 73px,#183466 73px 84px,#322666 84px 221px)"></div></div>
<div style="left:576px;top:906px;width:1982px;height:74px;"><div style="left:52px;top:0px;width:2px;height:74px;background:#101929"></div><div style="left:489px;top:0px;width:2px;height:74px;background:#101929"></div><div style="left:625px;top:0px;width:2px;height:74px;background:#101929"></div><div style="left:778px;top:0px;width:2px;height:74px;background:#101929"></div><div style="left:1028px;top:0px;width:2px;height:74px;background:#101929"></div><div style="left:1288px;top:0px;width:2px;height:74px;background:#101929"></div><div style="left:1491px;top:0px;width:2px;height:74px;background:#101929"></div><div style="left:1727px;top:0px;width:2px;height:74px;background:#101929"></div><div style="left:0px;top:72px;width:1982px;height:2px;background:#101929"></div><div style="left:16px;top:26px;width:20px;height:20px;background:#101929;border-radius:4px"></div><span class="t m" style="left:70.20px;top:19.00px;font-size:30px;line-height:39px;color:#8c919e;letter-spacing:-1.200px;">Mar 12, 2026 13:00:50</span><span class="t m" style="left:505.80px;top:19.00px;font-size:30px;line-height:39px;color:#1a7a44;letter-spacing:-1.200px;">200</span><span class="t" style="left:642.00px;top:19.00px;font-size:28px;line-height:36px;color:#8c919e;letter-spacing:-2.178px;">GET</span><span class="t" style="left:795.80px;top:19.00px;font-size:28px;line-height:36px;color:#8c919e;letter-spacing:0.720px;">acme-shop.com</span><span class="t" style="left:1047.20px;top:19.00px;font-size:28px;line-height:36px;color:#8c919e;letter-spacing:0.830px;">/bikes/mountai<span style="font-size:27.57px;letter-spacing:0;margin-left:-1.43px">…</span></span><span class="t" style="left:1509.20px;top:19.00px;font-size:28px;line-height:36px;color:#8c919e;letter-spacing:0.500px;">syd</span><span class="t m" style="left:1306.00px;top:19.00px;font-size:30px;line-height:39px;color:#8c919e;letter-spacing:-1.200px;">1,088</span><span class="t m" style="left:1390.00px;top:19.00px;font-size:30px;line-height:39px;color:#5a6273;letter-spacing:-1.200px;">ms</span><span class="t" style="left:1560.40px;top:22.00px;font-size:24px;line-height:31px;color:#5a6273;letter-spacing:0.030px;">Sydney</span><div style="left:1745px;top:20px;width:221px;height:32px;background:linear-gradient(90deg,#10463a 0px 28px,#0b455a 28px 93px,#183466 93px 111px,#322666 111px 221px)"></div></div>
<div style="left:576px;top:980px;width:1982px;height:74px;"><div style="left:52px;top:0px;width:2px;height:74px;background:#101929"></div><div style="left:489px;top:0px;width:2px;height:74px;background:#101929"></div><div style="left:625px;top:0px;width:2px;height:74px;background:#101929"></div><div style="left:778px;top:0px;width:2px;height:74px;background:#101929"></div><div style="left:1028px;top:0px;width:2px;height:74px;background:#101929"></div><div style="left:1288px;top:0px;width:2px;height:74px;background:#101929"></div><div style="left:1491px;top:0px;width:2px;height:74px;background:#101929"></div><div style="left:1727px;top:0px;width:2px;height:74px;background:#101929"></div><div style="left:0px;top:72px;width:1982px;height:2px;background:#101929"></div><div style="left:16px;top:26px;width:20px;height:20px;background:#101929;border-radius:4px"></div><span class="t m" style="left:70.20px;top:19.00px;font-size:30px;line-height:39px;color:#8c919e;letter-spacing:-1.200px;">Mar 12, 2026 12:50:50</span><span class="t m" style="left:505.80px;top:19.00px;font-size:30px;line-height:39px;color:#1a7a44;letter-spacing:-1.200px;">200</span><span class="t" style="left:641.50px;top:19.00px;font-size:28px;line-height:36px;color:#8c919e;letter-spacing:-1.010px;">POST</span><span class="t" style="left:795.80px;top:19.00px;font-size:28px;line-height:36px;color:#8c919e;letter-spacing:0.073px;">api.acme-shop.<span style="font-size:24.46px;letter-spacing:0;margin-left:-2.23px">…</span></span><span class="t" style="left:1047.20px;top:19.00px;font-size:28px;line-height:36px;color:#8c919e;letter-spacing:0.900px;">/v1/orders</span><span class="t" style="left:1509.20px;top:19.00px;font-size:28px;line-height:36px;color:#8c919e;letter-spacing:0.500px;">syd</span><span class="t m" style="left:1306.00px;top:19.00px;font-size:30px;line-height:39px;color:#8c919e;letter-spacing:-1.200px;">1,080</span><span class="t m" style="left:1390.00px;top:19.00px;font-size:30px;line-height:39px;color:#5a6273;letter-spacing:-1.200px;">ms</span><span class="t" style="left:1560.40px;top:22.00px;font-size:24px;line-height:31px;color:#5a6273;letter-spacing:0.030px;">Sydney</span><div style="left:1745px;top:20px;width:221px;height:32px;background:linear-gradient(90deg,#10463a 0px 24px,#0b455a 24px 71px,#183466 71px 87px,#322666 87px 221px)"></div></div>
<div style="left:576px;top:1054px;width:1982px;height:74px;"><div style="left:52px;top:0px;width:2px;height:74px;background:#101929"></div><div style="left:489px;top:0px;width:2px;height:74px;background:#101929"></div><div style="left:625px;top:0px;width:2px;height:74px;background:#101929"></div><div style="left:778px;top:0px;width:2px;height:74px;background:#101929"></div><div style="left:1028px;top:0px;width:2px;height:74px;background:#101929"></div><div style="left:1288px;top:0px;width:2px;height:74px;background:#101929"></div><div style="left:1491px;top:0px;width:2px;height:74px;background:#101929"></div><div style="left:1727px;top:0px;width:2px;height:74px;background:#101929"></div><div style="left:0px;top:72px;width:1982px;height:2px;background:#101929"></div><div style="left:16px;top:26px;width:20px;height:20px;background:#101929;border-radius:4px"></div><span class="t m" style="left:70.20px;top:19.00px;font-size:30px;line-height:39px;color:#8c919e;letter-spacing:-1.200px;">Mar 12, 2026 12:50:50</span><span class="t m" style="left:505.80px;top:19.00px;font-size:30px;line-height:39px;color:#1a7a44;letter-spacing:-1.200px;">200</span><span class="t" style="left:641.50px;top:19.00px;font-size:28px;line-height:36px;color:#8c919e;letter-spacing:-1.010px;">POST</span><span class="t" style="left:795.80px;top:19.00px;font-size:28px;line-height:36px;color:#8c919e;letter-spacing:0.073px;">api.acme-shop.<span style="font-size:24.46px;letter-spacing:0;margin-left:-2.23px">…</span></span><span class="t" style="left:1047.20px;top:19.00px;font-size:28px;line-height:36px;color:#8c919e;letter-spacing:0.900px;">/v1/orders</span><span class="t" style="left:1508.80px;top:19.00px;font-size:28px;line-height:36px;color:#8c919e;letter-spacing:1.102px;">gru</span><span class="t m" style="left:1306.00px;top:19.00px;font-size:30px;line-height:39px;color:#8c919e;letter-spacing:-1.200px;">1,161</span><span class="t m" style="left:1390.00px;top:19.00px;font-size:30px;line-height:39px;color:#5a6273;letter-spacing:-1.200px;">ms</span><span class="t" style="left:1559.40px;top:22.00px;font-size:24px;line-height:31px;color:#5a6273;letter-spacing:-0.051px;">Sao Paulo</span><div style="left:1745px;top:20px;width:221px;height:32px;background:linear-gradient(90deg,#10463a 0px 12px,#0b455a 12px 62px,#183466 62px 83px,#322666 83px 221px)"></div></div>
<div style="left:576px;top:1128px;width:1982px;height:74px;background:#100e19;"><div style="left:52px;top:0px;width:2px;height:74px;background:#101929"></div><div style="left:489px;top:0px;width:2px;height:74px;background:#101929"></div><div style="left:625px;top:0px;width:2px;height:74px;background:#101929"></div><div style="left:778px;top:0px;width:2px;height:74px;background:#101929"></div><div style="left:1028px;top:0px;width:2px;height:74px;background:#101929"></div><div style="left:1288px;top:0px;width:2px;height:74px;background:#101929"></div><div style="left:1491px;top:0px;width:2px;height:74px;background:#101929"></div><div style="left:1727px;top:0px;width:2px;height:74px;background:#101929"></div><div style="left:0px;top:72px;width:1982px;height:2px;background:#101929"></div><div style="left:16px;top:26px;width:20px;height:20px;background:#93502b;border-radius:4px"></div><span class="t m" style="left:70.20px;top:19.00px;font-size:30px;line-height:39px;color:#8c919e;letter-spacing:-1.200px;">Mar 12, 2026 12:50:50</span><span class="t m" style="left:506.80px;top:19.00px;font-size:30px;line-height:39px;color:#a45624;letter-spacing:-1.200px;">404</span><span class="t" style="left:641.50px;top:19.00px;font-size:28px;line-height:36px;color:#8c919e;letter-spacing:-1.010px;">POST</span><span class="t" style="left:795.80px;top:19.00px;font-size:28px;line-height:36px;color:#8c919e;letter-spacing:0.073px;">api.acme-shop.<span style="font-size:24.46px;letter-spacing:0;margin-left:-2.23px">…</span></span><span class="t" style="left:1047.20px;top:19.00px;font-size:28px;line-height:36px;color:#8c919e;letter-spacing:0.900px;">/v1/orders</span><span class="t" style="left:1509.20px;top:19.00px;font-size:28px;line-height:36px;color:#8c919e;letter-spacing:0.714px;">hkg</span><span class="t m" style="left:1306.00px;top:19.00px;font-size:30px;line-height:39px;color:#8c919e;letter-spacing:-1.200px;">1,107</span><span class="t m" style="left:1390.00px;top:19.00px;font-size:30px;line-height:39px;color:#5a6273;letter-spacing:-1.200px;">ms</span><span class="t" style="left:1563.50px;top:22.00px;font-size:24px;line-height:31px;color:#5a6273;letter-spacing:0.069px;">Hong Kong</span><div style="left:1745px;top:20px;width:221px;height:32px;background:linear-gradient(90deg,#10463a 0px 26px,#0b455a 26px 68px,#183466 68px 83px,#322666 83px 221px)"></div></div>
<div style="left:576px;top:1202px;width:1982px;height:74px;"><div style="left:52px;top:0px;width:2px;height:74px;background:#101929"></div><div style="left:489px;top:0px;width:2px;height:74px;background:#101929"></div><div style="left:625px;top:0px;width:2px;height:74px;background:#101929"></div><div style="left:778px;top:0px;width:2px;height:74px;background:#101929"></div><div style="left:1028px;top:0px;width:2px;height:74px;background:#101929"></div><div style="left:1288px;top:0px;width:2px;height:74px;background:#101929"></div><div style="left:1491px;top:0px;width:2px;height:74px;background:#101929"></div><div style="left:1727px;top:0px;width:2px;height:74px;background:#101929"></div><div style="left:0px;top:72px;width:1982px;height:2px;background:#101929"></div><div style="left:16px;top:26px;width:20px;height:20px;background:#101929;border-radius:4px"></div><span class="t m" style="left:70.20px;top:19.00px;font-size:30px;line-height:39px;color:#8c919e;letter-spacing:-1.200px;">Mar 12, 2026 12:40:50</span><span class="t m" style="left:505.80px;top:19.00px;font-size:30px;line-height:39px;color:#1a7a44;letter-spacing:-1.200px;">200</span><span class="t" style="left:642.00px;top:19.00px;font-size:28px;line-height:36px;color:#8c919e;letter-spacing:-2.178px;">GET</span><span class="t" style="left:795.80px;top:19.00px;font-size:28px;line-height:36px;color:#8c919e;letter-spacing:0.720px;">acme-shop.com</span><span class="t" style="left:1047.20px;top:19.00px;font-size:28px;line-height:36px;color:#8c919e;letter-spacing:1.352px;">/bikes/city/cargo</span><span class="t" style="left:1509.20px;top:19.00px;font-size:28px;line-height:36px;color:#8c919e;letter-spacing:0.500px;">syd</span><span class="t m" style="left:1306.00px;top:19.00px;font-size:30px;line-height:39px;color:#8c919e;letter-spacing:-1.200px;">1,172</span><span class="t m" style="left:1390.00px;top:19.00px;font-size:30px;line-height:39px;color:#5a6273;letter-spacing:-1.200px;">ms</span><span class="t" style="left:1560.40px;top:22.00px;font-size:24px;line-height:31px;color:#5a6273;letter-spacing:0.030px;">Sydney</span><div style="left:1745px;top:20px;width:221px;height:32px;background:linear-gradient(90deg,#10463a 0px 16px,#0b455a 16px 61px,#183466 61px 84px,#322666 84px 221px)"></div></div>
<div style="left:576px;top:1276px;width:1982px;height:74px;"><div style="left:52px;top:0px;width:2px;height:74px;background:#101929"></div><div style="left:489px;top:0px;width:2px;height:74px;background:#101929"></div><div style="left:625px;top:0px;width:2px;height:74px;background:#101929"></div><div style="left:778px;top:0px;width:2px;height:74px;background:#101929"></div><div style="left:1028px;top:0px;width:2px;height:74px;background:#101929"></div><div style="left:1288px;top:0px;width:2px;height:74px;background:#101929"></div><div style="left:1491px;top:0px;width:2px;height:74px;background:#101929"></div><div style="left:1727px;top:0px;width:2px;height:74px;background:#101929"></div><div style="left:0px;top:72px;width:1982px;height:2px;background:#101929"></div><div style="left:16px;top:26px;width:20px;height:20px;background:#101929;border-radius:4px"></div><span class="t m" style="left:70.20px;top:19.00px;font-size:30px;line-height:39px;color:#8c919e;letter-spacing:-1.200px;">Mar 12, 2026 12:40:50</span><span class="t m" style="left:505.80px;top:19.00px;font-size:30px;line-height:39px;color:#1a7a44;letter-spacing:-1.200px;">200</span><span class="t" style="left:642.00px;top:19.00px;font-size:28px;line-height:36px;color:#8c919e;letter-spacing:-2.178px;">GET</span><span class="t" style="left:795.80px;top:19.00px;font-size:28px;line-height:36px;color:#8c919e;letter-spacing:0.720px;">acme-shop.com</span><span class="t" style="left:1047.20px;top:19.00px;font-size:28px;line-height:36px;color:#8c919e;letter-spacing:1.352px;">/bikes/city/cargo</span><span class="t" style="left:1509.20px;top:19.00px;font-size:28px;line-height:36px;color:#8c919e;letter-spacing:0.714px;">hkg</span><span class="t m" style="left:1306.00px;top:19.00px;font-size:30px;line-height:39px;color:#8c919e;letter-spacing:-1.200px;">1,230</span><span class="t m" style="left:1390.00px;top:19.00px;font-size:30px;line-height:39px;color:#5a6273;letter-spacing:-1.200px;">ms</span><span class="t" style="left:1563.50px;top:22.00px;font-size:24px;line-height:31px;color:#5a6273;letter-spacing:0.069px;">Hong Kong</span><div style="left:1745px;top:20px;width:221px;height:32px;background:linear-gradient(90deg,#10463a 0px 28px,#0b455a 28px 82px,#183466 82px 94px,#322666 94px 221px)"></div></div>
<div style="left:576px;top:1350px;width:1982px;height:74px;"><div style="left:52px;top:0px;width:2px;height:74px;background:#101929"></div><div style="left:489px;top:0px;width:2px;height:74px;background:#101929"></div><div style="left:625px;top:0px;width:2px;height:74px;background:#101929"></div><div style="left:778px;top:0px;width:2px;height:74px;background:#101929"></div><div style="left:1028px;top:0px;width:2px;height:74px;background:#101929"></div><div style="left:1288px;top:0px;width:2px;height:74px;background:#101929"></div><div style="left:1491px;top:0px;width:2px;height:74px;background:#101929"></div><div style="left:1727px;top:0px;width:2px;height:74px;background:#101929"></div><div style="left:0px;top:72px;width:1982px;height:2px;background:#101929"></div><div style="left:16px;top:26px;width:20px;height:20px;background:#101929;border-radius:4px"></div><span class="t m" style="left:70.20px;top:19.00px;font-size:30px;line-height:39px;color:#8c919e;letter-spacing:-1.200px;">Mar 12, 2026 12:40:50</span><span class="t m" style="left:505.80px;top:19.00px;font-size:30px;line-height:39px;color:#1a7a44;letter-spacing:-1.200px;">200</span><span class="t" style="left:642.00px;top:19.00px;font-size:28px;line-height:36px;color:#8c919e;letter-spacing:-2.178px;">GET</span><span class="t" style="left:795.80px;top:19.00px;font-size:28px;line-height:36px;color:#8c919e;letter-spacing:0.720px;">acme-shop.com</span><span class="t" style="left:1047.20px;top:19.00px;font-size:28px;line-height:36px;color:#8c919e;letter-spacing:1.352px;">/bikes/city/cargo</span><span class="t" style="left:1508.80px;top:19.00px;font-size:28px;line-height:36px;color:#8c919e;letter-spacing:1.102px;">gru</span><span class="t m" style="left:1306.00px;top:19.00px;font-size:30px;line-height:39px;color:#8c919e;letter-spacing:-1.200px;">1,345</span><span class="t m" style="left:1390.00px;top:19.00px;font-size:30px;line-height:39px;color:#5a6273;letter-spacing:-1.200px;">ms</span><span class="t" style="left:1559.40px;top:22.00px;font-size:24px;line-height:31px;color:#5a6273;letter-spacing:-0.051px;">Sao Paulo</span><div style="left:1745px;top:20px;width:221px;height:32px;background:linear-gradient(90deg,#10463a 0px 15px,#0b455a 15px 72px,#183466 72px 90px,#322666 90px 221px)"></div></div>
<div style="left:576px;top:1424px;width:1982px;height:74px;"><div style="left:52px;top:0px;width:2px;height:74px;background:#101929"></div><div style="left:489px;top:0px;width:2px;height:74px;background:#101929"></div><div style="left:625px;top:0px;width:2px;height:74px;background:#101929"></div><div style="left:778px;top:0px;width:2px;height:74px;background:#101929"></div><div style="left:1028px;top:0px;width:2px;height:74px;background:#101929"></div><div style="left:1288px;top:0px;width:2px;height:74px;background:#101929"></div><div style="left:1491px;top:0px;width:2px;height:74px;background:#101929"></div><div style="left:1727px;top:0px;width:2px;height:74px;background:#101929"></div><div style="left:0px;top:72px;width:1982px;height:2px;background:#101929"></div><div style="left:16px;top:26px;width:20px;height:20px;background:#101929;border-radius:4px"></div><span class="t m" style="left:70.20px;top:19.00px;font-size:30px;line-height:39px;color:#8c919e;letter-spacing:-1.200px;">Mar 12, 2026 12:30:50</span><span class="t m" style="left:505.80px;top:19.00px;font-size:30px;line-height:39px;color:#1a7a44;letter-spacing:-1.200px;">200</span><span class="t" style="left:642.00px;top:19.00px;font-size:28px;line-height:36px;color:#8c919e;letter-spacing:-2.178px;">GET</span><span class="t" style="left:795.80px;top:19.00px;font-size:28px;line-height:36px;color:#8c919e;letter-spacing:0.720px;">acme-shop.com</span><span class="t" style="left:1047.20px;top:19.00px;font-size:28px;line-height:36px;color:#8c919e;letter-spacing:1.352px;">/bikes/city/cargo</span><span class="t" style="left:1508.80px;top:19.00px;font-size:28px;line-height:36px;color:#8c919e;letter-spacing:1.102px;">gru</span><span class="t m" style="left:1306.00px;top:19.00px;font-size:30px;line-height:39px;color:#8c919e;letter-spacing:-1.200px;">1,055</span><span class="t m" style="left:1390.00px;top:19.00px;font-size:30px;line-height:39px;color:#5a6273;letter-spacing:-1.200px;">ms</span><span class="t" style="left:1559.40px;top:22.00px;font-size:24px;line-height:31px;color:#5a6273;letter-spacing:-0.051px;">Sao Paulo</span><div style="left:1745px;top:20px;width:221px;height:32px;background:linear-gradient(90deg,#10463a 0px 19px,#0b455a 19px 69px,#183466 69px 87px,#322666 87px 221px)"></div></div>
<div style="left:576px;top:1498px;width:1982px;height:74px;"><div style="left:52px;top:0px;width:2px;height:74px;background:#101929"></div><div style="left:489px;top:0px;width:2px;height:74px;background:#101929"></div><div style="left:625px;top:0px;width:2px;height:74px;background:#101929"></div><div style="left:778px;top:0px;width:2px;height:74px;background:#101929"></div><div style="left:1028px;top:0px;width:2px;height:74px;background:#101929"></div><div style="left:1288px;top:0px;width:2px;height:74px;background:#101929"></div><div style="left:1491px;top:0px;width:2px;height:74px;background:#101929"></div><div style="left:1727px;top:0px;width:2px;height:74px;background:#101929"></div><div style="left:0px;top:72px;width:1982px;height:2px;background:#101929"></div><div style="left:16px;top:26px;width:20px;height:20px;background:#101929;border-radius:4px"></div><span class="t m" style="left:70.20px;top:19.00px;font-size:30px;line-height:39px;color:#8c919e;letter-spacing:-1.200px;">Mar 12, 2026 12:30:50</span><span class="t m" style="left:505.80px;top:19.00px;font-size:30px;line-height:39px;color:#1a7a44;letter-spacing:-1.200px;">200</span><span class="t" style="left:642.00px;top:19.00px;font-size:28px;line-height:36px;color:#8c919e;letter-spacing:-2.178px;">GET</span><span class="t" style="left:795.80px;top:19.00px;font-size:28px;line-height:36px;color:#8c919e;letter-spacing:0.720px;">acme-shop.com</span><span class="t" style="left:1047.20px;top:19.00px;font-size:28px;line-height:36px;color:#8c919e;letter-spacing:1.352px;">/bikes/city/cargo</span><span class="t" style="left:1509.20px;top:19.00px;font-size:28px;line-height:36px;color:#8c919e;letter-spacing:0.714px;">hkg</span><span class="t m" style="left:1306.00px;top:19.00px;font-size:30px;line-height:39px;color:#8c919e;letter-spacing:-1.200px;">1,201</span><span class="t m" style="left:1390.00px;top:19.00px;font-size:30px;line-height:39px;color:#5a6273;letter-spacing:-1.200px;">ms</span><span class="t" style="left:1563.50px;top:22.00px;font-size:24px;line-height:31px;color:#5a6273;letter-spacing:0.069px;">Hong Kong</span><div style="left:1745px;top:20px;width:221px;height:32px;background:linear-gradient(90deg,#10463a 0px 19px,#0b455a 19px 69px,#183466 69px 87px,#322666 87px 221px)"></div></div>
<div style="left:2556px;top:2px;width:2px;height:1510px;background:rgba(255,255,255,.175)"></div>
<div style="left:576px;top:682px;width:1982px;height:76px;outline:2px solid #0ea5e9;outline-offset:-2px;background:#020817"><div style="left:52px;top:0px;width:2px;height:76px;background:#0ea5e9"></div><div style="left:17px;top:28px;width:19px;height:20px;background:#0ea5e9;border-radius:4px"></div><span class="t" style="left:70.00px;top:22.00px;font-size:28px;line-height:36px;color:#0ea5e9;letter-spacing:0.773px;-webkit-text-stroke:0.4px;">Live Mode</span></div>
</main>
<div style="left:1057px;top:542px;width:633px;height:220px;border:2px solid #1e293b;border-radius:12px;box-sizing:border-box;background:#020817;box-shadow:0 8px 12px -2px rgba(0,0,0,.3)"><span class="t" style="left:18.20px;top:19.00px;font-size:28px;line-height:36px;color:#94a3b8;letter-spacing:0.493px;">Timestamp</span><span class="t m" style="left:395.16px;top:19.00px;font-size:30px;line-height:39px;color:#f8fafc;letter-spacing:-1.200px;">1773317450279</span><span class="t" style="left:16.20px;top:67.00px;font-size:28px;line-height:36px;color:#94a3b8;letter-spacing:-1.962px;">UTC</span><span class="t m" style="left:259.74px;top:67.00px;font-size:30px;line-height:39px;color:#f8fafc;letter-spacing:-1.200px;">Mar 12, 2026 12:10:50</span><span class="t" style="left:16.20px;top:115.00px;font-size:28px;line-height:36px;color:#94a3b8;letter-spacing:0.910px;">Europe/Berlin</span><span class="t m" style="left:259.74px;top:115.00px;font-size:30px;line-height:39px;color:#f8fafc;letter-spacing:-1.200px;">Mar 12, 2026 13:10:50</span><span class="t" style="left:16.20px;top:163.00px;font-size:28px;line-height:36px;color:#94a3b8;letter-spacing:0.388px;">Relative</span><span class="t m" style="left:394.16px;top:163.00px;font-size:30px;line-height:39px;color:#f8fafc;letter-spacing:-1.200px;">4 seconds ago</span></div>
<div style="left:2184px;top:1430px;width:342px;height:80px;background:#f8fafc;border-radius:13px"><span class="t" style="left:34.00px;top:23.00px;font-size:28px;line-height:36px;color:#0f172a;letter-spacing:0.377px;-webkit-text-stroke:0.4px;-webkit-text-stroke:0.65px;">View GitHub Repo</span><svg class="ic" style="left:278px;top:24px" width="32" height="32" viewBox="0 0 24 24" fill="none" stroke="#0f172a" stroke-width="2" stroke-linecap="round" stroke-linejoin="round"><path d="m9 18 6-6-6-6"/></svg></div>
<script>(function(){var w=window.innerWidth||2558;if(w&&Math.abs(w-2558)>1){document.body.style.zoom=w/2558;}})();</script>
</body></html>
